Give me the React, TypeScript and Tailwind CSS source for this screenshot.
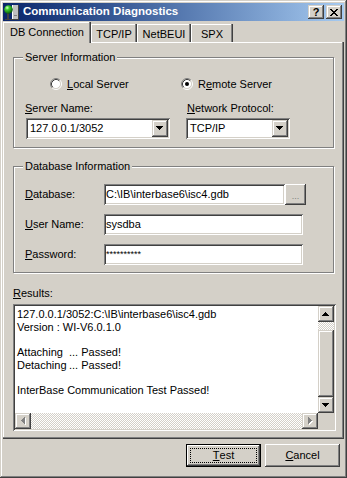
import React from "react";

const raised = "shadow-[inset_-1px_-1px_#404040,inset_1px_1px_#fff,inset_-2px_-2px_#808080]";
const raised2 = "shadow-[inset_-1px_-1px_#404040,inset_1px_1px_#d4d0c8,inset_-2px_-2px_#808080,inset_2px_2px_#fff]";
const sunken = "shadow-[inset_1px_1px_#808080,inset_-1px_-1px_#fff,inset_2px_2px_#404040,inset_-2px_-2px_#d4d0c8]";
const dither = "bg-[repeating-conic-gradient(#d4d0c8_0%_25%,#fff_0%_50%)] bg-[length:2px_2px]";
const tab = "h-[18px] pt-[2px] flex items-center justify-center bg-[#d4d0c8] shadow-[inset_-1px_0_#404040,inset_-2px_0_#808080,inset_1px_1px_#fff]";

const arrows: Record<string, string> = {
  down: "M0 0h7v1H0zM1 1h5v1H1zM2 2h3v1H2zM3 3h1v1H3z",
  up: "M3 0h1v1H3zM2 1h3v1H2zM1 2h5v1H1zM0 3h7v1H0z",
  left: "M3 0h1v7H3zM2 1h1v5H2zM1 2h1v3H1zM0 3h1v1H0z",
  right: "M0 0h1v7H0zM1 1h1v5H1zM2 2h1v3H2zM3 3h1v1H3z",
};

function Arrow({ dir, off }: { dir: string; off?: boolean }) {
  const wide = dir === "up" || dir === "down";
  return (
    <svg width={wide ? 8 : 5} height={wide ? 5 : 8} viewBox={wide ? "0 0 8 5" : "0 0 5 8"} shapeRendering="crispEdges">
      {off && <path d={arrows[dir]} fill="#fff" transform="translate(1 1)" />}
      <path d={arrows[dir]} fill={off ? "#808080" : "#000"} />
    </svg>
  );
}

function Radio({ checked }: { checked?: boolean }) {
  return (
    <svg width="12" height="12" viewBox="0 0 12 12" className="shrink-0">
      <circle cx="6" cy="6" r="4.5" fill="#fff" />
      <path d="M9.89 2.11A5.5 5.5 0 0 0 2.11 9.89" stroke="#808080" fill="none" />
      <path d="M2.11 9.89A5.5 5.5 0 0 0 9.89 2.11" stroke="#fff" fill="none" />
      <path d="M9.18 2.82A4.5 4.5 0 0 0 2.82 9.18" stroke="#404040" fill="none" />
      <path d="M2.82 9.18A4.5 4.5 0 0 0 9.18 2.82" stroke="#d4d0c8" fill="none" />
      {checked && <circle cx="6" cy="6" r="2" fill="#000" />}
    </svg>
  );
}

function ServerIcon() {
  return (
    <svg width="16" height="16" viewBox="0 0 16 16" className="shrink-0">
      <defs>
        <radialGradient id="ball" cx="0.35" cy="0.3" r="0.7">
          <stop offset="0" stopColor="#d8ffc8" />
          <stop offset="0.35" stopColor="#3ccf2a" />
          <stop offset="1" stopColor="#0a5a0a" />
        </radialGradient>
      </defs>
      <rect x="8" y="1" width="7" height="14" fill="#c0c0c0" />
      <rect x="8" y="1" width="1" height="14" fill="#fff" />
      <rect x="14" y="1" width="1" height="14" fill="#404040" />
      <rect x="8" y="15" width="7" height="1" fill="#404040" />
      <rect x="10" y="11" width="3" height="1" fill="#808080" />
      <rect x="3" y="9" width="2" height="6" fill="#404040" />
      <rect x="1" y="15" width="7" height="1" fill="#404040" />
      <circle cx="4.5" cy="5.5" r="4.3" fill="url(#ball)" />
    </svg>
  );
}

function Combo({ value, className }: { value: string; className: string }) {
  return (
    <div className={"h-[21px] bg-white flex items-center p-[2px] " + sunken + " " + className}>
      <span className="flex-1 pl-[2px] leading-none">{value}</span>
      <div className={"w-[16px] h-[17px] bg-[#d4d0c8] flex items-center justify-center " + raised2}>
        <Arrow dir="down" />
      </div>
    </div>
  );
}

function Field({ className, children }: { className: string; children: React.ReactNode }) {
  return (
    <div className={"h-[21px] bg-white flex items-center px-[2px] leading-none " + sunken + " " + className}>
      {children}
    </div>
  );
}

function ScrollBtn({ dir, off }: { dir: string; off?: boolean }) {
  return (
    <div className={"w-[16px] h-[16px] shrink-0 bg-[#d4d0c8] flex items-center justify-center " + raised2}>
      <Arrow dir={dir} off={off} />
    </div>
  );
}

export default function App() {
  return (
    <div className="w-[347px] h-[478px] p-[3px] bg-[#d4d0c8] flex flex-col text-[11px] text-black font-['Liberation_Sans',Arial,sans-serif] shadow-[inset_-1px_-1px_#404040,inset_1px_1px_#d4d0c8,inset_-2px_-2px_#808080,inset_2px_2px_#fff]">
      {/* caption */}
      <div className="h-[18px] shrink-0 flex items-center pl-[1px] pr-[2px] bg-linear-to-r from-[#0a246a] to-[#a6caf0]">
        <ServerIcon />
        <span className="ml-[3px] font-bold text-white text-[11.5px] leading-none">Communication Diagnostics</span>
        <div className="ml-auto flex gap-[2px]">
          <div className={"w-[16px] h-[14px] bg-[#d4d0c8] flex items-center justify-center font-bold text-[11px] leading-none " + raised2}>?</div>
          <div className={"w-[16px] h-[14px] bg-[#d4d0c8] flex items-center justify-center " + raised2}>
            <svg width="8" height="7" viewBox="0 0 8 7" shapeRendering="crispEdges">
              <path d="M0 0h2v1H0zM6 0h2v1H6zM1 1h2v1H1zM5 1h2v1H5zM2 2h4v1H2zM3 3h2v1H3zM2 4h4v1H2zM1 5h2v1H1zM5 5h2v1H5zM0 6h2v1H0zM6 6h2v1H6z" fill="#000" />
            </svg>
          </div>
        </div>
      </div>

      {/* tabs */}
      <div className="h-[21px] shrink-0 flex items-end">
        <div className="relative z-10 -mb-px w-[88px] h-[21px] flex items-center justify-center bg-[#d4d0c8] shadow-[inset_-1px_0_#404040,inset_-2px_0_#808080,inset_1px_1px_#fff]">
          DB Connection
        </div>
        <div className={"w-[46px] " + tab}>TCP/IP</div>
        <div className={"w-[54px] " + tab}>NetBEUI</div>
        <div className={"w-[42px] " + tab}>SPX</div>
      </div>

      {/* page */}
      <div className="flex-1 flex flex-col pt-[9px] pl-[10px] bg-[#d4d0c8] shadow-[inset_-1px_-1px_#404040,inset_-2px_-2px_#808080,inset_1px_1px_#fff]">
        <fieldset className="w-[321px] h-[97px] border border-[#808080] shadow-[inset_1px_1px_#fff,1px_1px_#fff]">
          <legend className="ml-[9px] px-[2px] leading-[13px] bg-[#d4d0c8]">Server Information</legend>
          <div className="flex items-center h-[12px] mt-[14px]">
            <div className="flex items-center gap-[5px] ml-[36px] w-[131px]">
              <Radio />
              <span className="leading-none"><u>L</u>ocal Server</span>
            </div>
            <div className="flex items-center gap-[5px]">
              <Radio checked />
              <span className="leading-none">R<u>e</u>mote Server</span>
            </div>
          </div>
          <div className="flex mt-[12px] ml-[11px]">
            <div className="w-[161px] flex flex-col">
              <span className="leading-[13px]"><u>S</u>erver Name:</span>
              <Combo className="mt-[3px] ml-[1px] w-[144px]" value="127.0.0.1/3052" />
            </div>
            <div className="flex flex-col">
              <span className="leading-[13px] ml-[1px]"><u>N</u>etwork Protocol:</span>
              <Combo className="mt-[3px] w-[104px]" value="TCP/IP" />
            </div>
          </div>
        </fieldset>

        <fieldset className="mt-[12px] w-[321px] h-[113px] border border-[#808080] shadow-[inset_1px_1px_#fff,1px_1px_#fff]">
          <legend className="ml-[9px] px-[2px] leading-[13px] bg-[#d4d0c8]">Database Information</legend>
          <div className="flex flex-col gap-[9px] mt-[11px] ml-[11px]">
            <div className="flex items-center">
              <span className="w-[79px]"><u>D</u>atabase:</span>
              <Field className="w-[181px]">{"C:\\IB\\interbase6\\isc4.gdb"}</Field>
              <div className={"w-[21px] h-[21px] bg-[#d4d0c8] flex items-center justify-center pt-[4px] text-[9px] text-[#808080] leading-none " + raised}>...</div>
            </div>
            <div className="flex items-center">
              <span className="w-[79px]"><u>U</u>ser Name:</span>
              <Field className="w-[199px]">sysdba</Field>
            </div>
            <div className="flex items-center">
              <span className="w-[79px]"><u>P</u>assword:</span>
              <Field className="w-[199px] text-[9px]">**********</Field>
            </div>
          </div>
        </fieldset>

        <span className="mt-[14px] leading-[13px]"><u>R</u>esults:</span>
        <div className={"mt-[4px] w-[323px] h-[127px] p-[2px] bg-white flex flex-col " + sunken}>
          <div className="flex-1 flex min-h-0">
            <div className="flex-1 pl-[2px] pt-[2px] leading-[12.7px] whitespace-pre overflow-hidden">
              <div>{"127.0.0.1/3052:C:\\IB\\interbase6\\isc4.gdb"}</div>
              <div>Version : WI-V6.0.1.0</div>
              <div>{"\u00a0"}</div>
              <div><span className="inline-block w-[52px]">Attaching</span>... Passed!</div>
              <div><span className="inline-block w-[52px]">Detaching</span>... Passed!</div>
              <div>{"\u00a0"}</div>
              <div>InterBase Communication Test Passed!</div>
            </div>
            <div className="w-[16px] flex flex-col">
              <ScrollBtn dir="up" />
              <div className={"h-[8px] shrink-0 " + dither} />
              <div className={"flex-1 bg-[#d4d0c8] " + raised2} />
              <ScrollBtn dir="down" />
            </div>
          </div>
          <div className="h-[16px] shrink-0 flex">
            <ScrollBtn dir="left" off />
            <div className={"flex-1 " + dither} />
            <ScrollBtn dir="right" off />
            <div className="w-[16px] bg-[#d4d0c8]" />
          </div>
        </div>
      </div>

      {/* buttons */}
      <div className="h-[36px] shrink-0 flex justify-end items-start gap-[4px] pt-[5px] pr-[4px]">
        <div className={"w-[75px] h-[23px] border border-black bg-[#d4d0c8] p-[3px] flex " + raised}>
          <div className="flex-1 border border-dotted border-black flex items-center justify-center leading-none">
            <u>T</u>est
          </div>
        </div>
        <div className={"w-[75px] h-[23px] bg-[#d4d0c8] flex items-center justify-center leading-none " + raised}>
          <u>C</u>ancel
        </div>
      </div>
    </div>
  );
}
